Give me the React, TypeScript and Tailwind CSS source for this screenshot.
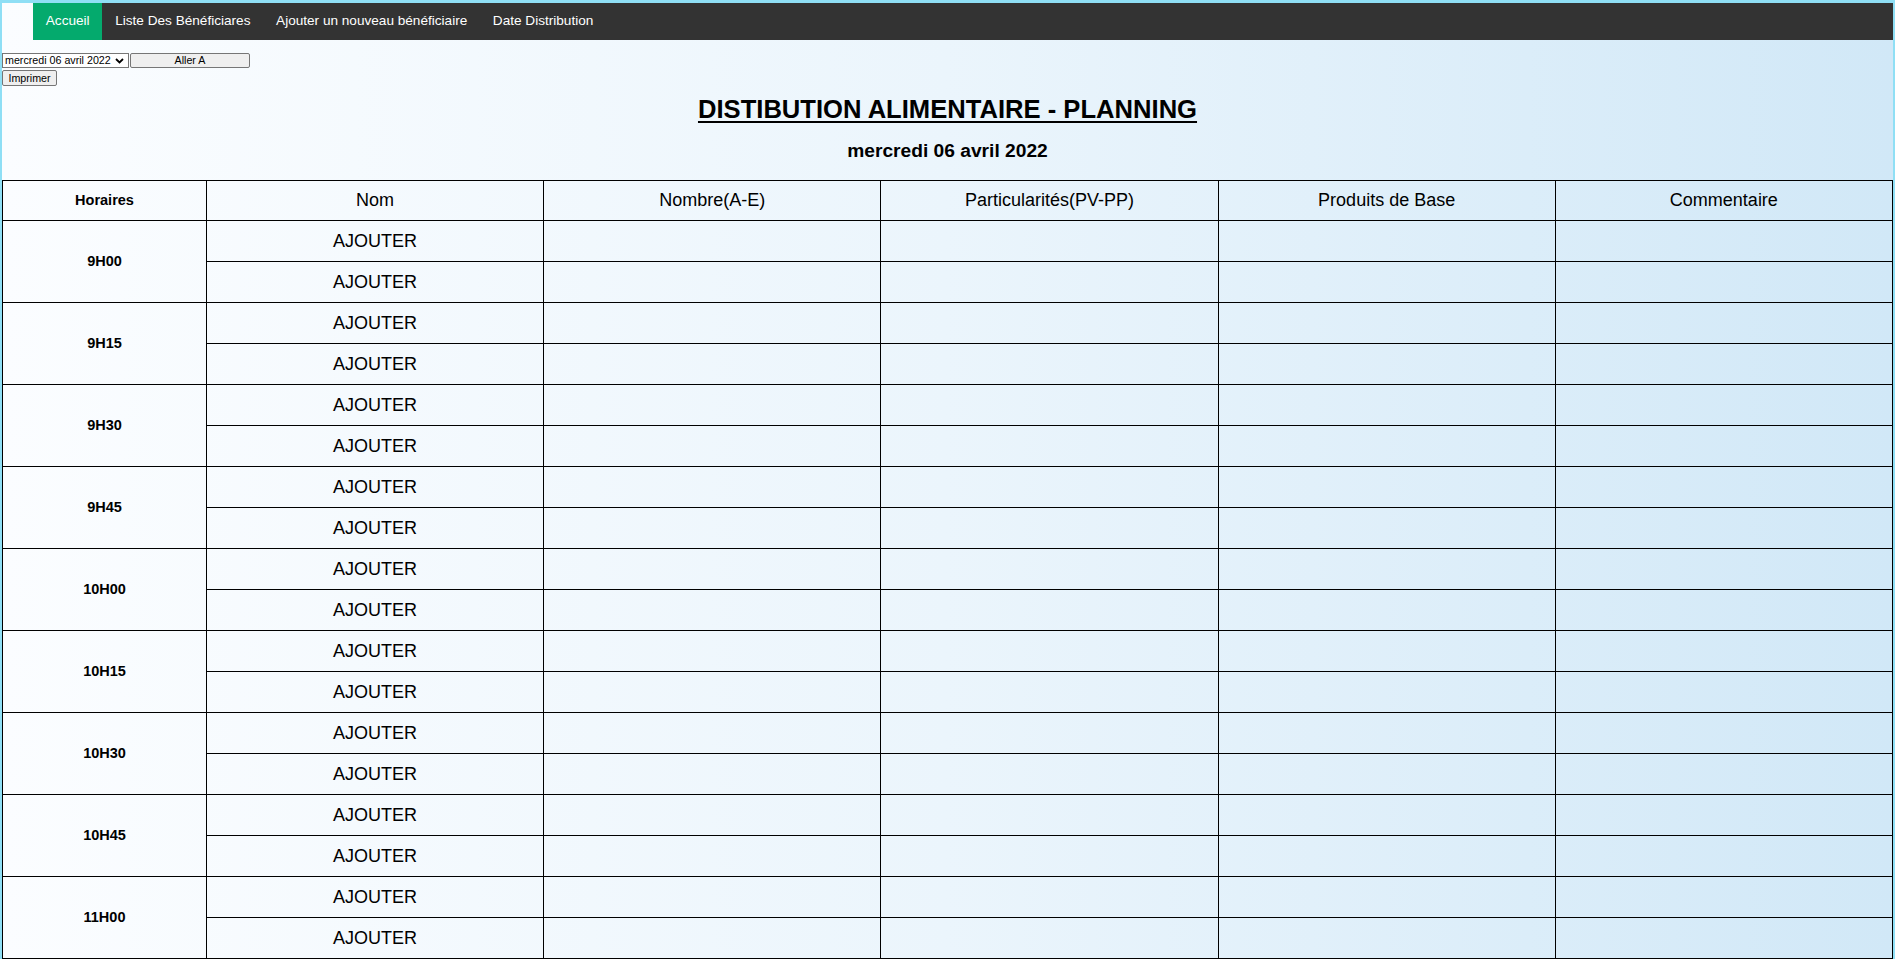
import { useState } from 'react';

const slots = ['9H00', '9H15', '9H30', '9H45', '10H00', '10H15', '10H30', '10H45', '11H00'];

const navLinks = ['Accueil', 'Liste Des Bénéficiares', 'Ajouter un nouveau bénéficiaire', 'Date Distribution'];

const columns = ['Nombre(A-E)', 'Particularités(PV-PP)', 'Produits de Base', 'Commentaire'];

function TopNav() {
  return (
    <nav className="ml-[31px] flex h-[37px] bg-[#333333]">
      {navLinks.map((label, i) => (
        <a
          key={label}
          href="#"
          className={`flex items-center px-[12.8px] text-[13.6px] text-white ${i === 0 ? 'bg-[#04aa6d]' : ''}`}
        >
          {label}
        </a>
      ))}
    </nav>
  );
}

function DatePicker() {
  const [date, setDate] = useState('2022-04-06');
  return (
    <div className="mt-[13px] flex h-[15px] leading-none">
      <div className="relative">
        <select
          value={date}
          onChange={(e) => setDate(e.target.value)}
          className="block h-[15px] w-[127px] appearance-none border border-[#767676] bg-white py-0 pl-[2px] text-[10.7px] leading-[13px] text-black"
        >
          <option value="2022-04-06">mercredi 06 avril 2022</option>
          <option value="2022-04-13">mercredi 13 avril 2022</option>
        </select>
        <svg
          className="pointer-events-none absolute right-[5px] top-[5px] h-[6px] w-[9px]"
          viewBox="0 0 9 6"
          fill="none"
          stroke="black"
          strokeWidth="1.8"
        >
          <path d="M1 1l3.5 3.5L8 1" />
        </svg>
      </div>
      <button className="ml-px block h-[15px] w-[120px] rounded-[2px] border border-[#767676] bg-[#efefef] text-[10.7px] leading-[13px] text-black">
        Aller A
      </button>
    </div>
  );
}

export default function App() {
  return (
    <div
      className="min-h-screen border-x-2 border-t-[3px] border-[#8fdff5] bg-linear-to-r from-[#fbfdff] via-[#ebf5fc] to-[#d1e8f7] text-black"
      style={{ fontFamily: '"Liberation Sans", Arial, sans-serif' }}
    >
      <TopNav />
      <DatePicker />
      <button className="mt-[2px] block h-[16px] w-[55px] rounded-[2px] border border-[#767676] bg-[#efefef] text-[10.7px] leading-[14px] text-black">
        Imprimer
      </button>

      <h1 className="mt-[8px] text-center text-[25.6px] font-bold leading-[30px] underline underline-offset-[3px]">
        DISTIBUTION ALIMENTAIRE - PLANNING
      </h1>
      <h2 className="mt-[16px] text-center text-[19.2px] font-bold leading-[22px]">mercredi 06 avril 2022</h2>

      <table className="mt-[18px] w-full table-fixed border-collapse">
        <colgroup>
          <col className="w-[204px]" />
          <col />
          <col />
          <col />
          <col />
          <col />
        </colgroup>
        <thead>
          <tr className="h-[40px]">
            <th className="border border-black text-[14.5px] font-bold">Horaires</th>
            <th className="border border-black text-[18px] font-normal">Nom</th>
            {columns.map((c) => (
              <th key={c} className="border border-black text-[18px] font-normal">
                {c}
              </th>
            ))}
          </tr>
        </thead>
        <tbody>
          {slots.map((slot) =>
            [0, 1].map((n) => (
              <tr key={slot + n} className="h-[41px]">
                {n === 0 && (
                  <td rowSpan={2} className="border border-black text-center text-[14.5px] font-bold">
                    {slot}
                  </td>
                )}
                <td className="border border-black text-center text-[18px]">AJOUTER</td>
                {columns.map((c) => (
                  <td key={c} className="border border-black" />
                ))}
              </tr>
            ))
          )}
        </tbody>
      </table>
    </div>
  );
}
